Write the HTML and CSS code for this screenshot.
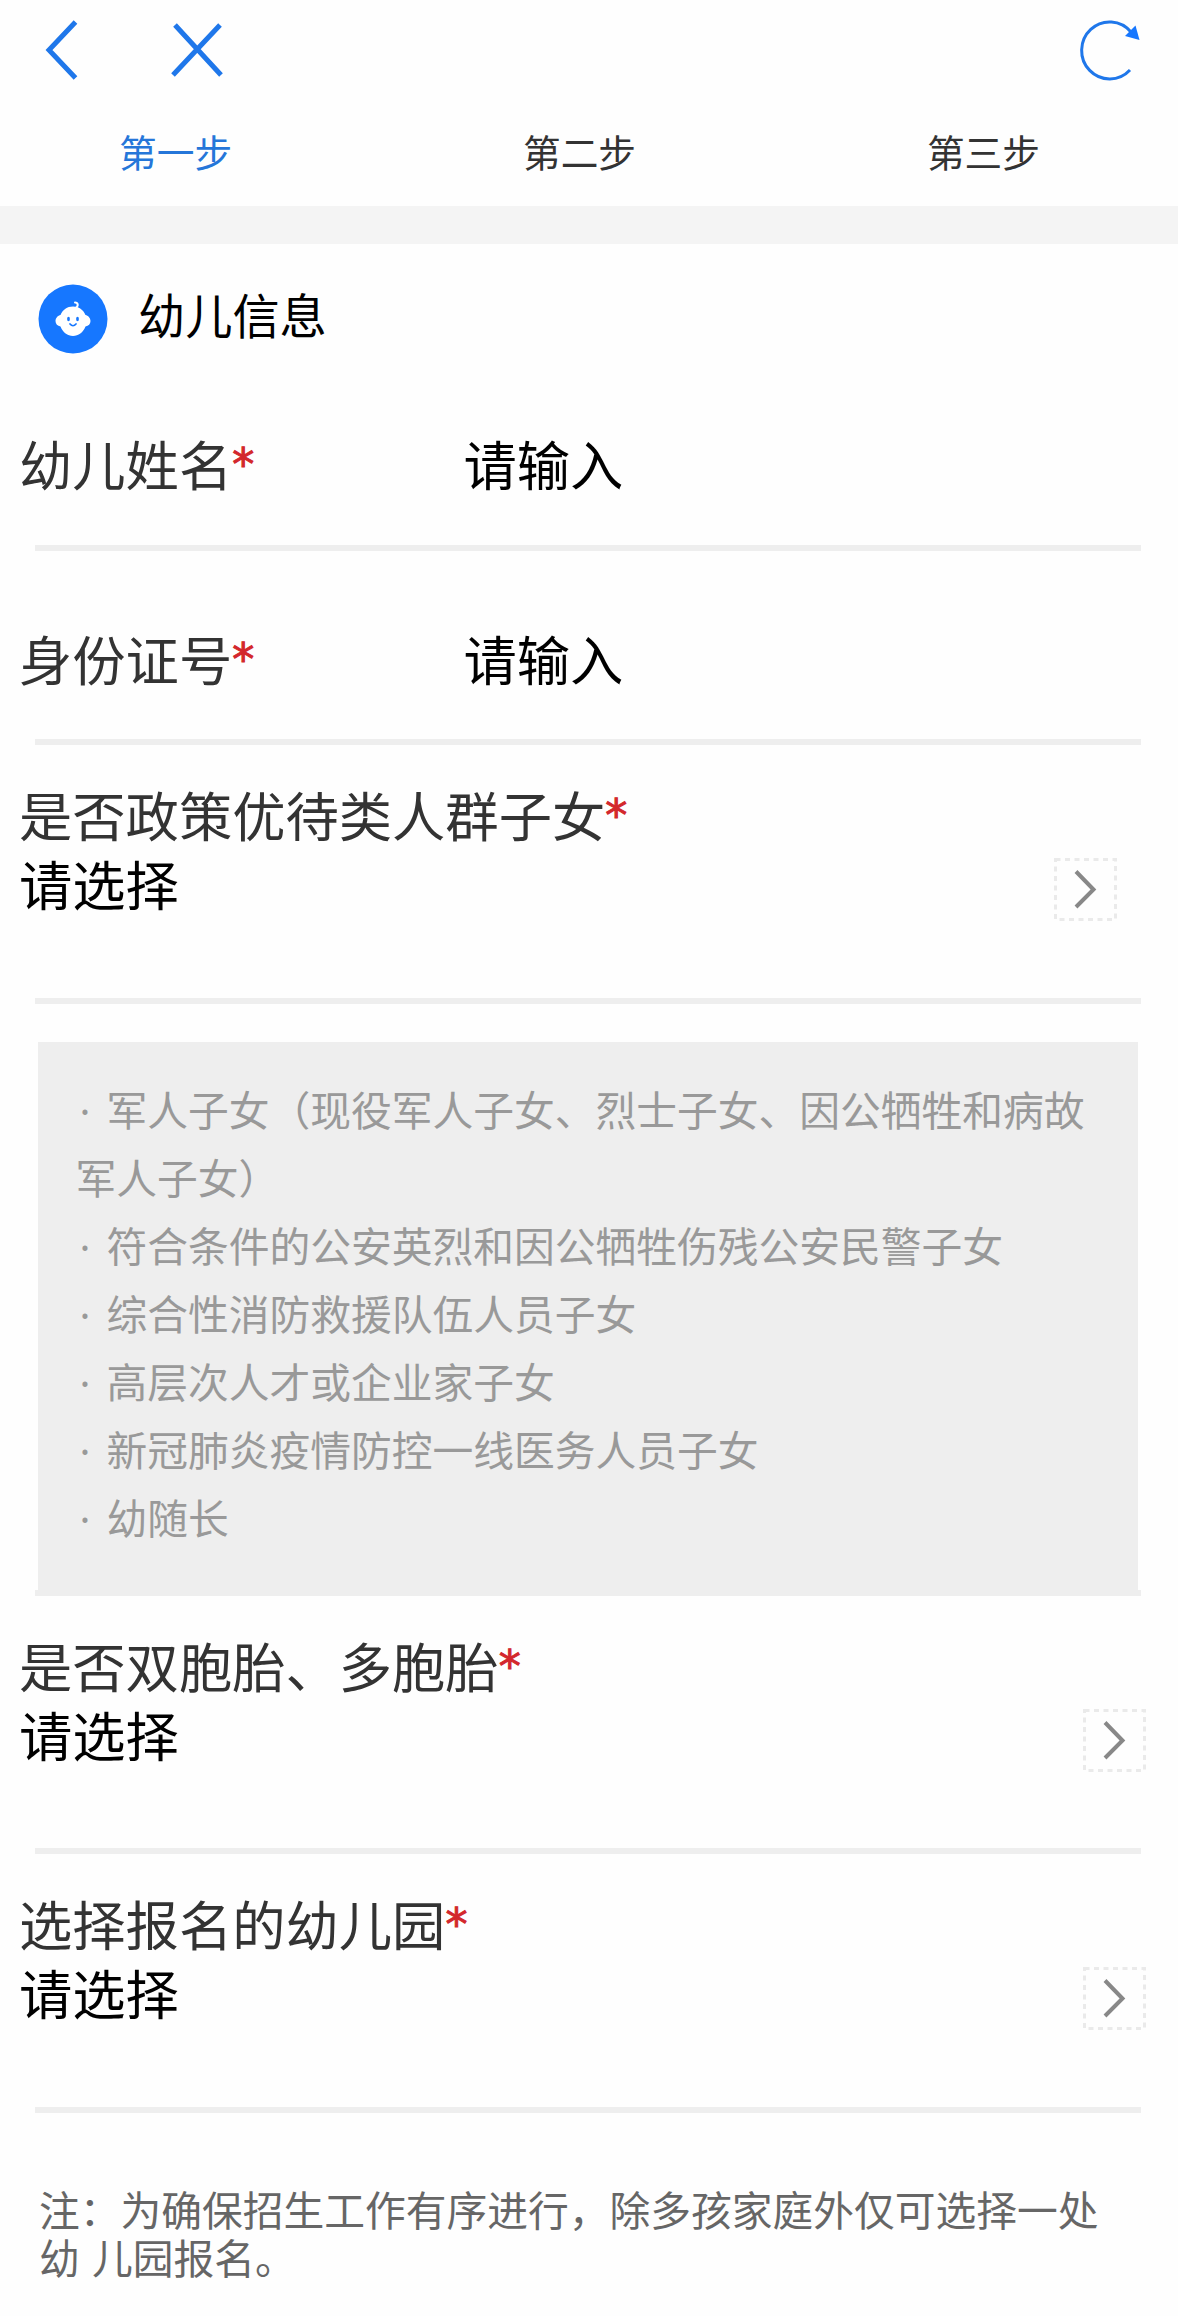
FILE: index.html
```html
<!DOCTYPE html>
<html lang="zh-CN">
<head>
<meta charset="utf-8">
<title>幼儿信息</title>
<link rel="stylesheet" href="styles.css">
</head>
<body>
<header class="topbar">
  <svg class="icon-back" width="40" height="70" viewBox="0 0 40 70"><path d="M34.500 7 8 35 34.500 63"/></svg>
  <svg class="icon-close" width="60" height="70" viewBox="0 0 60 70"><path d="M10 10 56 60M55 10 8 60"/></svg>
  <svg class="icon-refresh" width="66" height="70" viewBox="0 0 66 70"><path class="arc" d="M54 17A28 28.500 0 1 0 53 55"/><path class="tip" d="M58.500 10.500 62.500 25 48 21Z"/></svg>
</header>
<nav class="steps">
  <span class="step active">第一步</span>
  <span class="step">第二步</span>
  <span class="step">第三步</span>
</nav>
<main>
  <section class="section-title">
    <svg width="70" height="70" viewBox="0 0 70 70">
      <circle cx="35" cy="35" r="34.500" fill="#1677ff"/>
      <path d="M37.500 24C41 22 40 18.500 37 18.500" fill="none" stroke="#fff" stroke-width="2" stroke-linecap="round"/>
      <path d="M35 22.500C41 22.500 45 25.500 47.500 31C50 31.500 52.500 34 52.500 37C52.500 40 50.500 42 47.500 42.500C45 48.500 40.500 52 35 52C29.500 52 25 48.500 22.500 42.500C19.500 42 17.500 40 17.500 37C17.500 34 20 31.500 22.500 31C25 25.500 29 22.500 35 22.500Z" fill="#fff"/>
      <g fill="#1677ff"><ellipse cx="30.500" cy="35" rx="1.400" ry="2.200"/><ellipse cx="39.500" cy="35" rx="1.400" ry="2.200"/></g>
      <path d="M32 40Q35 43.500 38 40" fill="none" stroke="#1677ff" stroke-width="1.700" stroke-linecap="round"/>
    </svg>
    <h1>幼儿信息</h1>
  </section>

  <div class="field name">
    <label>幼儿姓名<i>*</i></label><span class="value">请输入</span>
  </div>
  <hr>
  <div class="field idno">
    <label>身份证号<i>*</i></label><span class="value">请输入</span>
  </div>
  <hr>
  <div class="select policy">
    <label>是否政策优待类人群子女<i>*</i></label>
    <div class="choice"><span class="value">请选择</span>
      <svg class="more" width="63" height="63" viewBox="0 0 63 63"><rect x="1.500" y="1.500" width="60" height="60"/><path d="M22 13.500 39.500 31.500 22 49"/></svg>
    </div>
  </div>
  <hr>
  <ul class="tips">
    <li><b>·</b>军人子女（现役军人子女、烈士子女、因公牺牲和病故军人子女）</li>
    <li><b>·</b>符合条件的公安英烈和因公牺牲伤残公安民警子女</li>
    <li><b>·</b>综合性消防救援队伍人员子女</li>
    <li><b>·</b>高层次人才或企业家子女</li>
    <li><b>·</b>新冠肺炎疫情防控一线医务人员子女</li>
    <li><b>·</b>幼随长</li>
  </ul>
  <hr>
  <div class="select twins">
    <label>是否双胞胎、多胞胎<i>*</i></label>
    <div class="choice"><span class="value">请选择</span>
      <svg class="more" width="63" height="63" viewBox="0 0 63 63"><rect x="1.500" y="1.500" width="60" height="60"/><path d="M22 13.500 39.500 31.500 22 49"/></svg>
    </div>
  </div>
  <hr>
  <div class="select school">
    <label>选择报名的幼儿园<i>*</i></label>
    <div class="choice"><span class="value">请选择</span>
      <svg class="more" width="63" height="63" viewBox="0 0 63 63"><rect x="1.500" y="1.500" width="60" height="60"/><path d="M22 13.500 39.500 31.500 22 49"/></svg>
    </div>
  </div>
  <hr>
  <p class="note">注：为确保招生工作有序进行，除多孩家庭外仅可选择一处<br>幼 儿园报名。</p>
</main>
</body>
</html>
```
FILE: styles.css
```css
* {
  box-sizing: border-box;
}

body {
  margin: 0;
  height: 2316px;
  overflow: hidden;
  background: #fefefe;
  color: #000;
  font-family: "Noto Sans CJK SC", sans-serif;
  font-size: 53.3px;
}

svg {
  display: block;
  flex: none;
}

.topbar {
  display: flex;
  align-items: center;
  height: 100px;
  padding: 0 35px 0 41px;
  fill: none;
  stroke: #1f77ea;
  stroke-width: 5;
}

.icon-close {
  margin-left: 84px;
}

.icon-refresh {
  margin-left: auto;
}

.arc {
  stroke-width: 3;
}

.tip {
  fill: #1677ff;
  stroke: none;
}

.steps {
  display: flex;
  justify-content: space-between;
  height: 106px;
  padding: 15px 138px 0 119px;
  color: #333;
  font-size: 37.7px;
  line-height: 72px;
}

.step.active {
  color: #2576d9;
}

main {
  border-top: 38px solid #f4f4f4;
}

.section-title {
  display: flex;
  align-items: center;
  height: 149px;
  padding-left: 37.5px;
}

h1 {
  margin: -10px 0 0 30.5px;
  font-size: 47.2px;
  font-weight: 400;
  line-height: 70px;
}

label {
  color: #333;
}

label i {
  color: #d3272c;
  font-family: "DejaVu Sans", sans-serif;
  font-size: 44px;
  font-style: normal;
  line-height: 0;
  vertical-align: 6px;
  -webkit-text-stroke: 1px #d3272c;
}

.field {
  display: flex;
  padding-left: 19px;
  line-height: 70px;
}

.field label {
  width: 444.5px;
}

.name {
  height: 152px;
  padding-top: 35px;
}

.idno {
  height: 188px;
  padding-top: 72px;
}

hr {
  height: 6px;
  margin: 0 37px 0 35px;
  border: 0;
  background: #eee;
}

.select {
  padding: 34px 32px 0 19px;
  line-height: 69px;
}

.select label {
  display: block;
  height: 69px;
}

.choice {
  display: flex;
  align-items: flex-start;
  justify-content: space-between;
  height: 69px;
}

.more {
  margin-top: 10px;
  fill: none;
  stroke: #888;
  stroke-width: 4;
}

.more rect {
  stroke: #eaeaea;
  stroke-width: 3;
  stroke-dasharray: 5 4.5;
}

.policy {
  height: 253px;
  padding-right: 61px;
}

.twins {
  height: 252px;
}

.school {
  height: 253px;
}

.tips {
  height: 548px;
  margin: 38px 40px 0 38px;
  padding: 33px 34px 0 37.5px;
  background: #eee;
  color: #999;
  font-size: 40.75px;
  line-height: 68px;
  list-style: none;
}

.tips b {
  display: inline-block;
  width: 31px;
  padding-left: 4px;
  font-family: "Noto Sans", sans-serif;
  font-weight: 400;
  line-height: 1;
}

.note {
  margin: 72px 0 0 39px;
  color: #666;
  font-size: 40.75px;
  line-height: 48px;
  white-space: nowrap;
  word-spacing: 3px;
}
```
